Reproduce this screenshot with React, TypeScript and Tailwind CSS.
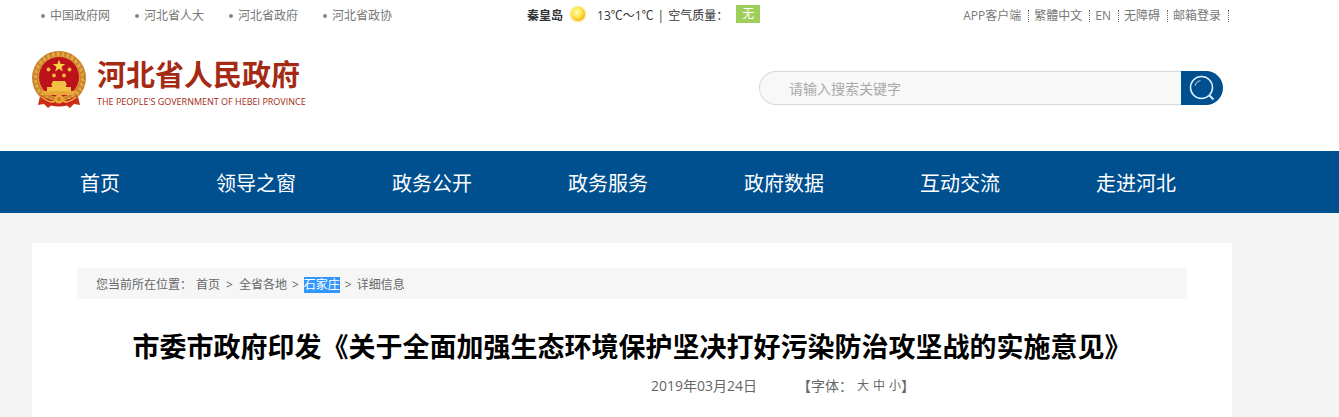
import { useState } from "react";

const portalLinks = ["中国政府网", "河北省人大", "河北省政府", "河北省政协"];

const toolLinks = ["APP客户端", "繁體中文", "EN", "无障碍", "邮箱登录"];

const navItems = ["首页", "领导之窗", "政务公开", "政务服务", "政府数据", "互动交流", "走进河北"];

const fontSizes = ["大", "中", "小"];

function SunIcon() {
  return (
    <svg width="22" height="22" viewBox="0 0 22 22" aria-hidden="true">
      <defs>
        <radialGradient id="halo">
          <stop offset="0.6" stopColor="#ffd54a" stopOpacity="0.9" />
          <stop offset="1" stopColor="#fff3b8" stopOpacity="0" />
        </radialGradient>
        <radialGradient id="sun" cx="0.42" cy="0.38" r="0.62">
          <stop offset="0" stopColor="#fffbc0" />
          <stop offset="0.55" stopColor="#ffe94a" />
          <stop offset="1" stopColor="#f8b21c" />
        </radialGradient>
      </defs>
      <circle cx="11" cy="11" r="10" fill="url(#halo)" />
      <circle cx="11" cy="11" r="7" fill="url(#sun)" />
    </svg>
  );
}

function Emblem() {
  return (
    <svg width="54" height="58" viewBox="0 0 54 58" aria-hidden="true">
      {/* ribbon */}
      <path d="M9 41 L6 54 L12 53 L16 57 L22 52 H32 L38 57 L42 53 L48 54 L45 41 Z" fill="#c8321a" />
      {/* wreath */}
      <circle cx="27" cy="27" r="27" fill="#c98530" />
      <circle cx="27" cy="27" r="24" fill="none" stroke="#e6a840" strokeWidth="4" strokeDasharray="3 2" />
      <circle cx="27" cy="27" r="25.5" fill="none" stroke="#b8651f" strokeWidth="1" strokeDasharray="2 3" />
      <circle cx="27" cy="26" r="20.5" fill="#be121b" stroke="#dc9a38" strokeWidth="1" />
      {/* stars */}
      <path
        d="M27 8.5 L28.6 13 L33.2 13.1 L29.5 16 L30.8 20.5 L27 17.8 L23.2 20.5 L24.5 16 L20.8 13.1 L25.4 13 Z"
        fill="#fbd24a"
      />
      <circle cx="16.5" cy="18.5" r="1.9" fill="#f6b93c" />
      <circle cx="37.5" cy="18.5" r="1.9" fill="#f6b93c" />
      <circle cx="22" cy="24.5" r="1.9" fill="#f6b93c" />
      <circle cx="32" cy="24.5" r="1.9" fill="#f6b93c" />
      {/* gate tower */}
      <path d="M21 30 H33 L35 34 H34 V36 H39 V40 H15 V36 H20 V34 H19 Z" fill="#f3bf45" />
      <path d="M9 40 H45 L41 44 H13 Z" fill="#e9a93a" />
      {/* cog and drapes */}
      <path d="M9 44 Q27 56 45 44 L43 51 Q27 60 11 51 Z" fill="#c8261a" />
      <circle cx="27" cy="48" r="4.5" fill="#e9a93a" />
      <circle cx="27" cy="48" r="2" fill="#d9781f" />
      <path d="M10 46 Q18 53 23 50 M44 46 Q36 53 31 50" fill="none" stroke="#f0b840" strokeWidth="1.5" />
    </svg>
  );
}

function SearchIcon() {
  return (
    <svg width="26" height="26" viewBox="0 0 26 26" fill="none" stroke="#dff1ff" aria-hidden="true">
      <circle cx="12.5" cy="12.5" r="11" strokeWidth="1.5" />
      <path d="M6 10.5 Q7.5 6.5 11.5 5.5" strokeWidth="1.2" opacity="0.7" />
      <path d="M20.5 20.5 L24.5 24.5" strokeWidth="2" />
    </svg>
  );
}

function TopBar() {
  return (
    <div className="flex h-8 items-center justify-between text-xs text-[#777777]">
      <ul className="flex w-[495px] gap-6 pl-2">
        {portalLinks.map((label) => (
          <li key={label} className="flex items-center gap-1">
            <span className="mx-px size-1 rounded-full bg-[#888888]" />
            <a href="#">{label}</a>
          </li>
        ))}
      </ul>
      <div className="flex flex-1 items-center text-[#333333]">
        <strong>秦皇岛</strong>
        <span className="mx-1 -mt-1">
          <SunIcon />
        </span>
        <span className="pl-1">13℃～1℃</span>
        <span className="mx-1">|</span>
        <span>空气质量：</span>
        <span className="-mt-1 ml-2 flex h-[18px] w-6 items-center justify-center bg-[#9dcf5a] text-white">无</span>
      </div>
      <ul className="flex pr-[3px]">
        {toolLinks.map((label) => (
          <li key={label} className="flex items-center">
            <a href="#" className="pr-[7px] pl-[5px]">
              {label}
            </a>
            <span className="h-3 border-r border-dotted border-[#666666]" />
          </li>
        ))}
      </ul>
    </div>
  );
}

function Header() {
  const [keyword, setKeyword] = useState("");

  return (
    <div className="flex h-[119px] items-start justify-between pt-[19px] pr-[9px]">
      <a href="#" className="flex items-start gap-[11px] text-[#a42a14]">
        <Emblem />
        <span className="pt-1">
          <span className="block text-[29px] leading-[40px] font-bold">河北省人民政府</span>
          <span className="block text-[9px] leading-[14px] font-medium whitespace-nowrap">
            THE PEOPLE'S GOVERNMENT OF HEBEI PROVINCE
          </span>
        </span>
      </a>
      <form className="mt-5 flex h-[34px] w-[464px]" onSubmit={(e) => e.preventDefault()}>
        <input
          type="text"
          aria-label="请输入搜索关键字"
          placeholder="请输入搜索关键字"
          value={keyword}
          onChange={(e) => setKeyword(e.target.value)}
          className="min-w-0 flex-1 rounded-l-full border border-r-0 border-[#d8d8d8] bg-[#f8f8f8] pt-[2px] pl-[29px] text-sm text-[#666666] outline-none placeholder:text-[#a9a9a9]"
        />
        <button
          type="submit"
          aria-label="搜索"
          className="flex w-[42px] items-center justify-center rounded-r-full bg-[#004f8f]"
        >
          <SearchIcon />
        </button>
      </form>
    </div>
  );
}

function Breadcrumb() {
  return (
    <nav className="flex h-[31px] items-center bg-[#f6f6f6] pt-[2px] pl-[19px] text-xs text-[#666666]">
      <span className="mr-1">您当前所在位置：</span>
      <a href="#">首页</a>
      <span className="mx-[6px]">&gt;</span>
      <a href="#">全省各地</a>
      <span className="mx-[5px]">&gt;</span>
      <a href="#" className="bg-[#3297fd] leading-4 text-white">
        石家庄
      </a>
      <span className="mx-[5px]">&gt;</span>
      <span>详细信息</span>
    </nav>
  );
}

export default function App() {
  return (
    <div className="min-h-screen bg-[#f4f4f4] font-['Open_Sans','Noto_Sans_CJK_SC',sans-serif]">
      <header className="bg-white">
        <div className="ml-8 max-w-[1200px]">
          <TopBar />
          <Header />
        </div>
        <nav className="bg-[#004f8f]">
          <ul className="ml-8 flex h-[62px] max-w-[1200px] items-center pt-1 text-xl text-white">
            {navItems.map((item) => (
              <li key={item}>
                <a href="#" className="px-12">
                  {item}
                </a>
              </li>
            ))}
          </ul>
        </nav>
      </header>

      <main className="mt-[30px] ml-8 min-h-[174px] max-w-[1200px] bg-white px-[45px] pt-[25px]">
        <Breadcrumb />
        <h1 className="mt-7 text-center text-[27px] leading-10 font-bold whitespace-nowrap text-black">
          市委市政府印发《关于全面加强生态环境保护坚决打好污染防治攻坚战的实施意见》
        </h1>
        <div className="mt-[9px] flex justify-end pr-[272px] text-sm text-[#666666]">
          <time dateTime="2019-03-24">2019年03月24日</time>
          <div className="ml-10 flex items-center">
            <span className="mr-1">【字体：</span>
            <span className="flex gap-1 text-xs">
              {fontSizes.map((size) => (
                <button key={size} type="button">
                  {size}
                </button>
              ))}
            </span>
            <span>】</span>
          </div>
        </div>
      </main>
    </div>
  );
}
